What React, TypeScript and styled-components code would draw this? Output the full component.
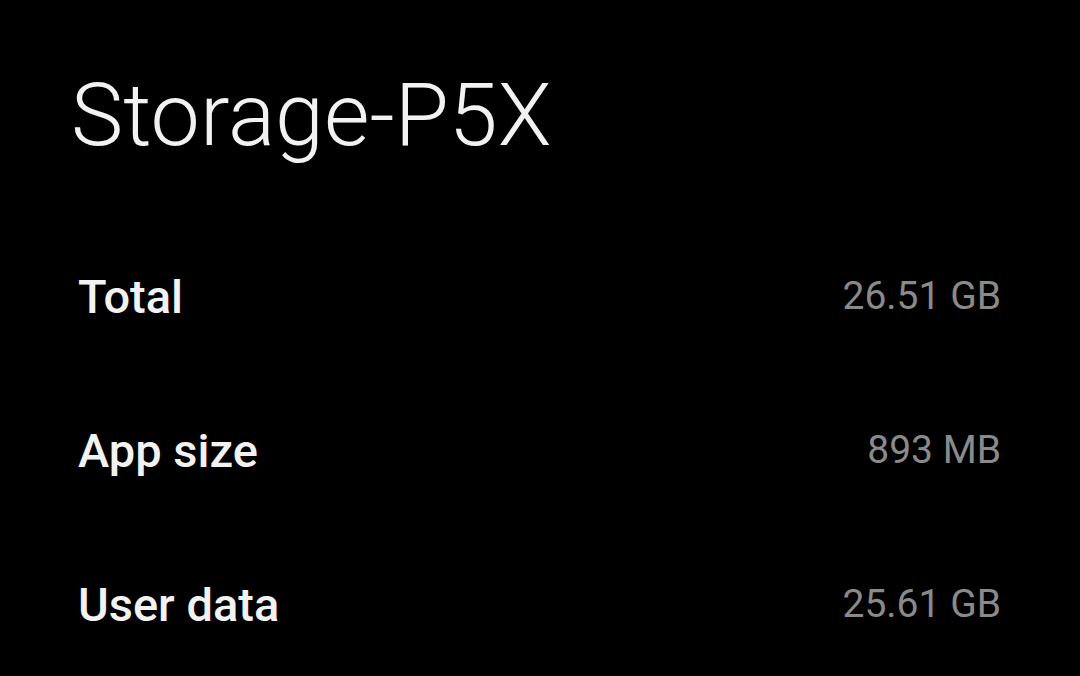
import styled, { createGlobalStyle } from "styled-components";

const GlobalStyle = createGlobalStyle`
  html, body {
    margin: 0;
    padding: 0;
    background: #000;
  }
  body {
    font-family: Roboto, "Noto Sans", sans-serif;
  }
`;

const Screen = styled.div`
  width: 1080px;
  height: 676px;
  background: #000;
  overflow: hidden;
  display: flex;
  flex-direction: column;
`;

const Title = styled.h1`
  margin: 0;
  padding: 65px 0 0 71px;
  font-size: 88px;
  font-weight: 300;
  line-height: 100px;
  color: #f2f2f2;
  letter-spacing: 0;
`;

const List = styled.div`
  display: flex;
  flex-direction: column;
  padding: 54px 79px 0 78px;
`;

const Row = styled.div`
  display: flex;
  align-items: center;
  justify-content: space-between;
  height: 154px;
`;

const Label = styled.span`
  font-size: 47px;
  font-weight: 500;
  color: #f2f2f2;
`;

const Value = styled.span`
  font-size: 39px;
  font-weight: 400;
  color: #8a8a8a;
`;

const rows = [
  { label: "Total", value: "26.51 GB" },
  { label: "App size", value: "893 MB" },
  { label: "User data", value: "25.61 GB" },
];

export default function App() {
  return (
    <Screen>
      <GlobalStyle />
      <Title>Storage-P5X</Title>
      <List>
        {rows.map((r) => (
          <Row key={r.label}>
            <Label>{r.label}</Label>
            <Value>{r.value}</Value>
          </Row>
        ))}
      </List>
    </Screen>
  );
}
